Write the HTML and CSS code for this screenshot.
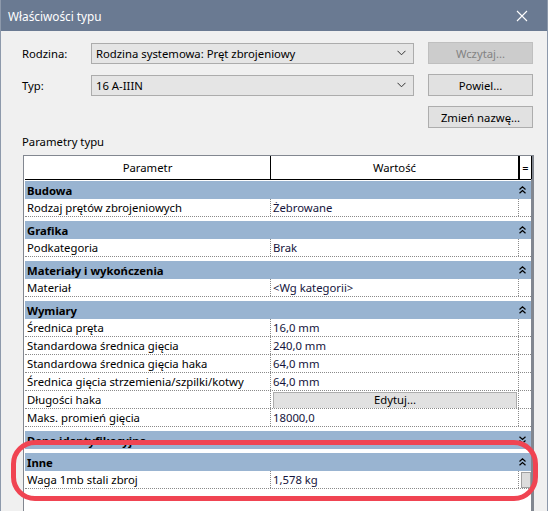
FILE: index.html
```html
<!doctype html>
<html lang="pl">

<head>
    <meta charset="utf-8">
    <title>Właściwości typu</title>
    <link rel="stylesheet" href="styles.css">
</head>

<body>
    <div class="window">
        <div class="title_bar">
            <span class="title_text">Właściwości typu</span>
            <svg class="close_icon" width="12" height="12" viewBox="0 0 12 12">
                <path d="M1 1 L11 11 M11 1 L1 11" stroke="#fff" stroke-width="1.1" fill="none" />
            </svg>
        </div>

        <div class="content">
            <div class="type_form">
                <span class="form_label">Rodzina:</span>
                <div class="combo">
                    <span>Rodzina systemowa: Pręt zbrojeniowy</span>
                    <svg width="9" height="6" viewBox="0 0 9 6"><path d="M0.5 0.8 L4.5 4.8 L8.5 0.8" stroke="#333" fill="none" /></svg>
                </div>
                <button class="win_button" disabled>Wczytaj...</button>

                <span class="form_label">Typ:</span>
                <div class="combo">
                    <span>16 A-IIIN</span>
                    <svg width="9" height="6" viewBox="0 0 9 6"><path d="M0.5 0.8 L4.5 4.8 L8.5 0.8" stroke="#333" fill="none" /></svg>
                </div>
                <button class="win_button">Powiel...</button>

                <span></span>
                <span></span>
                <button class="win_button">Zmień nazwę...</button>
            </div>

            <div class="section_label">Parametry typu</div>

            <div class="param_grid">
                <div class="grid_head">
                    <div class="cell">Parametr</div>
                    <div class="cell">Wartość</div>
                    <div class="cell eq_cell">=</div>
                </div>

                <div class="group">Budowa <svg class="chev" width="7" height="8" viewBox="0 0 7 8"><path d="M0.5 3.5 L3.5 0.8 L6.5 3.5 M0.5 7.2 L3.5 4.5 L6.5 7.2" stroke="#000" stroke-width="1.2" fill="none" /></svg></div>
                <div class="row"><div class="cell">Rodzaj prętów zbrojeniowych</div><div class="cell value">Żebrowane</div><div class="cell"></div></div>

                <div class="group">Grafika <svg class="chev" width="7" height="8" viewBox="0 0 7 8"><path d="M0.5 3.5 L3.5 0.8 L6.5 3.5 M0.5 7.2 L3.5 4.5 L6.5 7.2" stroke="#000" stroke-width="1.2" fill="none" /></svg></div>
                <div class="row"><div class="cell">Podkategoria</div><div class="cell value">Brak</div><div class="cell"></div></div>

                <div class="group">Materiały i wykończenia <svg class="chev" width="7" height="8" viewBox="0 0 7 8"><path d="M0.5 3.5 L3.5 0.8 L6.5 3.5 M0.5 7.2 L3.5 4.5 L6.5 7.2" stroke="#000" stroke-width="1.2" fill="none" /></svg></div>
                <div class="row"><div class="cell">Materiał</div><div class="cell value">&lt;Wg kategorii&gt;</div><div class="cell"></div></div>

                <div class="group">Wymiary <svg class="chev" width="7" height="8" viewBox="0 0 7 8"><path d="M0.5 3.5 L3.5 0.8 L6.5 3.5 M0.5 7.2 L3.5 4.5 L6.5 7.2" stroke="#000" stroke-width="1.2" fill="none" /></svg></div>
                <div class="row"><div class="cell">Średnica pręta</div><div class="cell value">16,0 mm</div><div class="cell"></div></div>
                <div class="row"><div class="cell">Standardowa średnica gięcia</div><div class="cell value">240,0 mm</div><div class="cell"></div></div>
                <div class="row"><div class="cell">Standardowa średnica gięcia haka</div><div class="cell value">64,0 mm</div><div class="cell"></div></div>
                <div class="row"><div class="cell">Średnica gięcia strzemienia/szpilki/kotwy</div><div class="cell value">64,0 mm</div><div class="cell"></div></div>
                <div class="row"><div class="cell">Długości haka</div><div class="cell edit_cell"><span class="edit_button">Edytuj...</span></div><div class="cell"></div></div>
                <div class="row"><div class="cell">Maks. promień gięcia</div><div class="cell value">18000,0</div><div class="cell"></div></div>

                <div class="group">Dane identyfikacyjne <svg class="chev" width="7" height="8" viewBox="0 0 7 8"><path d="M0.5 0.8 L3.5 3.5 L6.5 0.8 M0.5 4.5 L3.5 7.2 L6.5 4.5" stroke="#000" stroke-width="1.2" fill="none" /></svg></div>

                <div class="group">Inne <svg class="chev" width="7" height="8" viewBox="0 0 7 8"><path d="M0.5 3.5 L3.5 0.8 L6.5 3.5 M0.5 7.2 L3.5 4.5 L6.5 7.2" stroke="#000" stroke-width="1.2" fill="none" /></svg></div>
                <div class="row"><div class="cell">Waga 1mb stali zbroj</div><div class="cell value">1,578 kg</div><div class="cell"><span class="mini_button"></span></div></div>
            </div>
        </div>

        <!-- red annotation drawn over the dialog -->
        <div class="highlight"></div>
    </div>
</body>

</html>
```

FILE: styles.css
```css
/* Revit-like type properties dialog */
body {
    margin: 0;
    font-family: "Noto Sans", "Open Sans", sans-serif;
    font-size: 11.3px;
    color: #000;
}

.window {
    position: relative;
    width: 548px;
    height: 511px;
    box-sizing: border-box;
    overflow: hidden;
    background-color: #f0f0f0;
    border-left: 1px solid #8d99ab;
    border-right: 1px solid #8d99ab;
}

.title_bar {
    height: 31px;
    background-color: #6a7a92;
    color: #fff;
    display: flex;
    align-items: center;
    justify-content: space-between;
    padding: 0 19px 0 7px;
    font-size: 11.8px;
}

.content {
    padding: 11px 0 0 20px;
}

.type_form {
    display: grid;
    grid-template-columns: 70px 337px 105px;
    grid-auto-rows: 22px;
    row-gap: 10px;
    align-items: center;
}

.form_label {
    padding-left: 1px;
}

.combo {
    width: 323px;
    height: 21px;
    box-sizing: border-box;
    border: 1px solid #acacac;
    background-color: #e5e5e5;
    display: flex;
    align-items: center;
    justify-content: space-between;
    padding: 0 7px 0 4px;
}

.win_button {
    height: 22px;
    font-family: inherit;
    font-size: 11.3px;
    border: 1px solid #adadad;
    background-color: #e1e1e1;
    color: #000;
    padding: 0;
}

.win_button:disabled {
    background-color: #cccccc;
    border-color: #bfbfbf;
    color: #838383;
}

.section_label {
    margin-top: 4px;
    height: 20px;
    line-height: 20px;
    padding-left: 1px;
}

.param_grid {
    margin: 3px 0 0 2px;
    width: 511px;
    height: 400px;
    box-sizing: border-box;
    border: 1px solid #828790;
    border-right-width: 3px;
    background-color: #fff;
    padding-left: 1px;
}

.grid_head,
.row {
    display: grid;
    grid-template-columns: 246px 248px 13px;
}

.grid_head {
    height: 23px;
    border-bottom: 1px solid #000;
    margin-bottom: 1px;
}

.grid_head .cell {
    display: flex;
    align-items: center;
    justify-content: center;
    border-right: 1px solid #000;
}

.grid_head .eq_cell {
    border-left: 1px solid #000;
    font-size: 11px;
}

.group {
    height: 18px;
    margin-top: 4px;
    background-color: #99b4d1;
    font-weight: bold;
    display: flex;
    align-items: center;
    justify-content: space-between;
    padding: 0 5px 0 2px;
}

.grid_head + .group {
    margin-top: 0;
}

.row {
    height: 17px;
    border-bottom: 1px dotted #8a8a8a;
}

.row .cell {
    display: flex;
    align-items: center;
    padding-left: 2px;
    white-space: nowrap;
    overflow: hidden;
    border-right: 1px dotted #8a8a8a;
}

.row .cell:last-child {
    border-right: none;
}

.value {
    color: #14143c;
}

.edit_cell {
    padding: 1px 1px 0 1px;
}

.edit_button {
    flex: 1;
    height: 15px;
    border: 1px solid #adadad;
    background-color: #e1e1e1;
    text-align: center;
    line-height: 14px;
}

.mini_button {
    width: 8px;
    height: 14px;
    border: 1px solid #a0a0a0;
    background-color: #dcdcdc;
}

.highlight {
    position: absolute;
    left: 10px;
    top: 440px;
    width: 517px;
    height: 51px;
    border: 5px solid #f04452;
    border-radius: 24px;
}
```
